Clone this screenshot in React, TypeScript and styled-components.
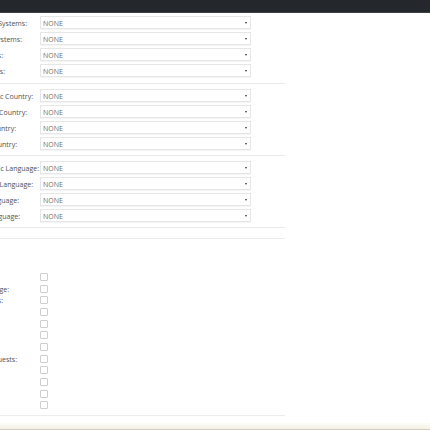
import styled, { createGlobalStyle } from "styled-components";

const Global = createGlobalStyle`
  html, body {
    margin: 0;
    padding: 0;
    background: #fff;
    overflow: hidden;
  }
  body {
    font-family: "Open Sans", "Noto Sans", sans-serif;
    height: 430px;
  }
`;

const Page = styled.div`
  display: flex;
  flex-direction: column;
  height: 430px;
`;

const TopBar = styled.div`
  height: 13px;
  background: #24282c;
  border-bottom: 1px solid #3a3f44;
  box-sizing: border-box;
  flex: none;
`;

const Form = styled.div`
  width: 285px;
  display: flex;
  flex-direction: column;
`;

const Section = styled.div<{ $pt: number; $pb: number }>`
  display: flex;
  flex-direction: column;
  gap: 3px;
  padding-top: ${p => p.$pt}px;
  padding-bottom: ${p => p.$pb}px;
  border-bottom: 1px solid #e9e9e9;
`;

const Row = styled.div`
  display: grid;
  grid-template-columns: 40px 210.7px;
  height: 13px;
  align-items: center;
`;

const Label = styled.div<{ $pad: number }>`
  display: flex;
  justify-content: flex-end;
  white-space: nowrap;
  padding-right: ${p => p.$pad}px;
  padding-top: 1px;
  font-size: 7px;
  color: #505050;
  line-height: 1;
`;

const Select = styled.div`
  height: 13px;
  box-sizing: border-box;
  border: 1px solid #e6e6e6;
  box-shadow: 0 1px 1px rgba(0, 0, 0, 0.04);
  display: flex;
  align-items: center;
  justify-content: space-between;
  padding: 1px 3px 0 2px;
  font-size: 7px;
  color: #6e6e6e;
`;

const Caret = styled.span`
  width: 0;
  height: 0;
  border-left: 1.6px solid transparent;
  border-right: 1.6px solid transparent;
  border-top: 2.6px solid #333;
`;

const Spacer = styled.div<{ $h: number }>`
  height: ${p => p.$h}px;
  flex: none;
`;

const Blank = styled.div`
  height: 32px;
  border-top: 1px solid #ebebeb;
`;

const Checks = styled.div`
  display: flex;
  flex-direction: column;
  padding-bottom: 4px;
  border-bottom: 1px solid #ececec;
`;

const CheckRow = styled.div`
  display: grid;
  grid-template-columns: 40px 8px;
  height: 11.7px;
  align-items: center;
`;

const Box = styled.span`
  width: 8px;
  height: 8px;
  box-sizing: border-box;
  border: 1px solid #cfcfcf;
  border-radius: 1px;
  background: #fff;
`;

const Footer = styled.div`
  margin-top: auto;
  height: 7.5px;
  background: linear-gradient(#fdfcf5, #f4f1e6);
  border-bottom: 1.5px solid #d3cfc2;
  box-sizing: border-box;
`;

type TRow = { label: string; pad: number };

const groups: { pt: number; pb: number; rows: TRow[] }[] = [
  {
    pt: 3,
    pb: 6,
    rows: [
      { label: "Include Specific Operating Systems:", pad: 13 },
      { label: "Exclude Specific Operating Systems:", pad: 18 },
      { label: "Include Operating Systems:", pad: 37 },
      { label: "Exclude Operating Systems:", pad: 35 },
    ],
  },
  {
    pt: 5,
    pb: 5,
    rows: [
      { label: "Include Specific Country:", pad: 7 },
      { label: "Exclude Specific Country:", pad: 13 },
      { label: "Include Country:", pad: 24 },
      { label: "Exclude Country:", pad: 23 },
    ],
  },
  {
    pt: 5,
    pb: 5,
    rows: [
      { label: "Include Specific Language:", pad: 1 },
      { label: "Exclude Specific Language:", pad: 7 },
      { label: "Include Language:", pad: 21 },
      { label: "Exclude Language:", pad: 20 },
    ],
  },
];

const checks: TRow[] = [
  { label: "Proxy:", pad: 60 },
  { label: "Browser Language:", pad: 31 },
  { label: "Cookies:", pad: 37 },
  { label: "Mobile:", pad: 60 },
  { label: "Tablet:", pad: 60 },
  { label: "Desktop:", pad: 60 },
  { label: "Bots:", pad: 60 },
  { label: "Repeat Requests:", pad: 23 },
  { label: "Referrer:", pad: 60 },
  { label: "Empty:", pad: 60 },
  { label: "Unique:", pad: 60 },
  { label: "Active:", pad: 60 },
];

export default function App() {
  return (
    <Page>
      <Global />
      <TopBar />
      <Form>
        {groups.map((g, i) => (
          <Section key={i} $pt={g.pt} $pb={g.pb}>
            {g.rows.map(r => (
              <Row key={r.label}>
                <Label $pad={r.pad}>{r.label}</Label>
                <Select>
                  NONE
                  <Caret />
                </Select>
              </Row>
            ))}
          </Section>
        ))}
        <Spacer $h={10} />
        <Blank />
        <Checks>
          {checks.map(c => (
            <CheckRow key={c.label}>
              <Label $pad={c.pad}>{c.label}</Label>
              <Box />
            </CheckRow>
          ))}
        </Checks>
      </Form>
      <Footer />
    </Page>
  );
}
